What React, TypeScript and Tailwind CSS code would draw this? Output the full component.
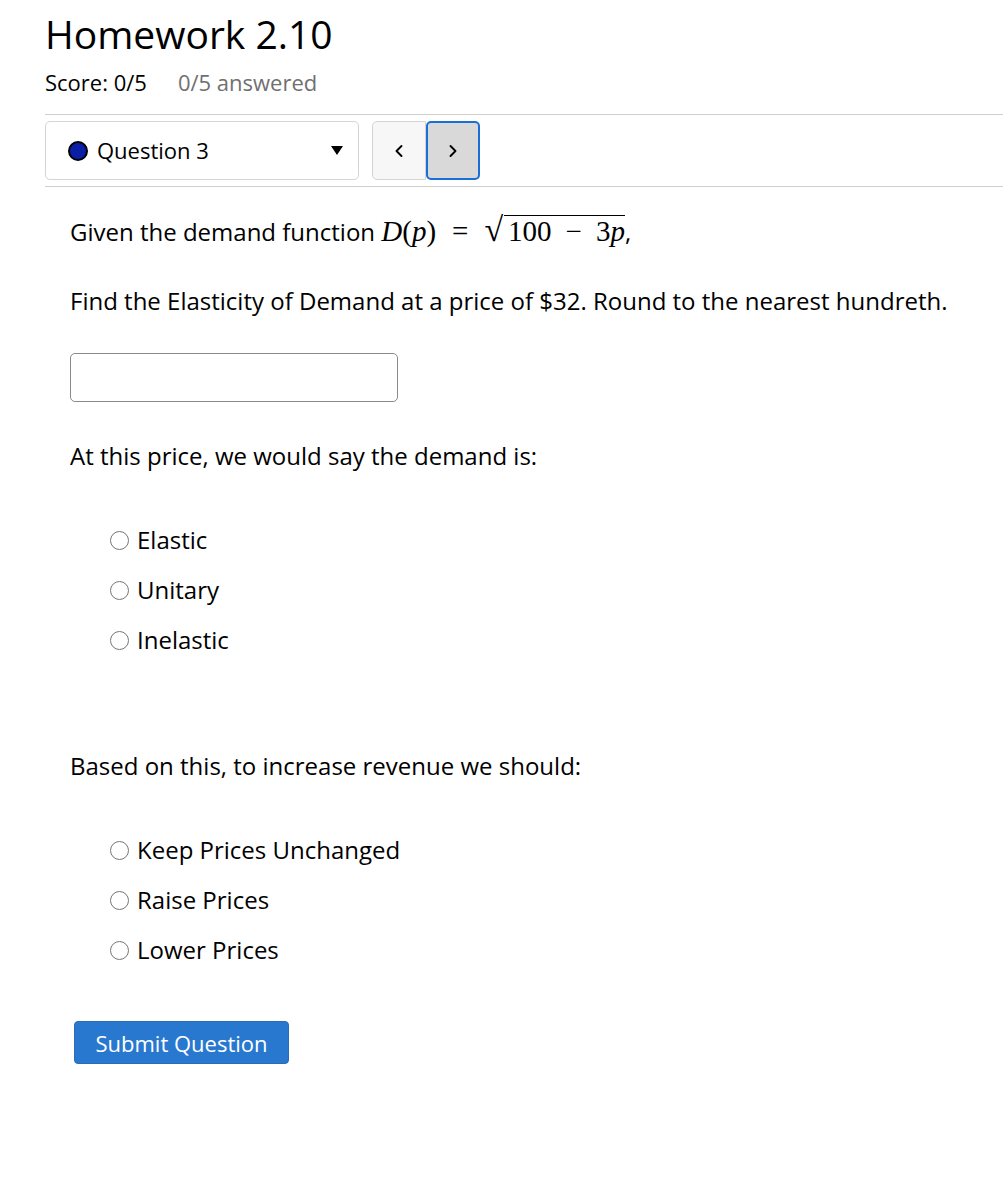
import { ChevronLeft, ChevronRight } from 'lucide-react';

const font = { fontFamily: '"Open Sans", "Noto Sans", sans-serif' };

function Radio({ label }: { label: string }) {
    return (
        <label className="flex items-center h-[50px]">
            <span className="w-[19px] h-[19px] rounded-full border border-[#767676] bg-white ml-[1px] mr-[8px]" />
            <span>{label}</span>
        </label>
    );
}

export default function App() {
    return (
        <div className="bg-white text-black w-[1003px] h-[1182px] pl-[45px] pt-[10px]" style={font}>
            {/* Encabezado */}
            <h1 className="text-[39px] leading-[48px] font-normal">Homework 2.10</h1>
            <div className="flex items-center text-[22px] mt-[10px] h-[28px]">
                <span>Score: 0/5</span>
                <span className="ml-[31px] text-[#707070]">0/5 answered</span>
            </div>

            {/* Selector de pregunta */}
            <div className="mt-[18px] border-t border-b border-[#cfcfcf] py-[6px] flex items-center">
                <div className="w-[314px] h-[59px] border border-[#d4d4d4] rounded-[5px] flex items-center pl-[22px] pr-[15px]">
                    <span className="w-[20px] h-[20px] rounded-full bg-[#0a1fa6] border-2 border-black" />
                    <span className="ml-[9px] text-[22px]">Question 3</span>
                    <span className="ml-auto w-0 h-0 border-l-[6px] border-r-[6px] border-t-[9px] border-l-transparent border-r-transparent border-t-black" />
                </div>
                <div className="ml-[13px] flex h-[59px]">
                    <button className="w-[54px] h-full bg-[#f7f7f7] border border-[#d4d4d4] rounded-l-[5px] flex items-center justify-center">
                        <ChevronLeft size={20} strokeWidth={2.25} />
                    </button>
                    <button className="w-[54px] h-full bg-[#d9d9d9] border-2 border-[#1a6fd6] rounded-[5px] flex items-center justify-center">
                        <ChevronRight size={20} strokeWidth={2.25} />
                    </button>
                </div>
            </div>

            {/* Pregunta */}
            <div className="pl-[25px] text-[24px] leading-[30px]">
                <p className="mt-[28px] flex items-baseline h-[32px]">
                    <span>Given the demand function&nbsp;</span>
                    <span className="text-[29px]" style={{ fontFamily: '"Liberation Serif", serif' }}>
                        <i>D</i>(<i>p</i>)<span className="mx-[16px]">=</span>
                        <span className="inline-flex items-baseline">
                            <span className="text-[34px] mr-[1px]">√</span>
                            <span className="border-t-[1.5px] border-black leading-[30px] pl-[4px]">
                                100<span className="mx-[14px]">−</span>3<i>p</i>
                            </span>
                        </span>
                    </span>
                    <span>,</span>
                </p>
                <p className="mt-[39px]">Find the Elasticity of Demand at a price of $32. Round to the nearest hundreth.</p>

                <input type="text" className="mt-[37px] block w-[328px] h-[49px] border border-[#8a8a8a] rounded-[5px] outline-none" />

                <p className="mt-[39px]">At this price, we would say the demand is:</p>
                <div className="mt-[44px] ml-[39px]">
                    <Radio label="Elastic" />
                    <Radio label="Unitary" />
                    <Radio label="Inelastic" />
                </div>

                <p className="mt-[86px]">Based on this, to increase revenue we should:</p>
                <div className="mt-[44px] ml-[39px]">
                    <Radio label="Keep Prices Unchanged" />
                    <Radio label="Raise Prices" />
                    <Radio label="Lower Prices" />
                </div>

                <button className="mt-[46px] ml-[4px] w-[215px] h-[43px] bg-[#2878d0] text-white text-[22px] rounded-[4px] border border-[#2a6cb8]">
                    Submit Question
                </button>
            </div>
        </div>
    );
}
